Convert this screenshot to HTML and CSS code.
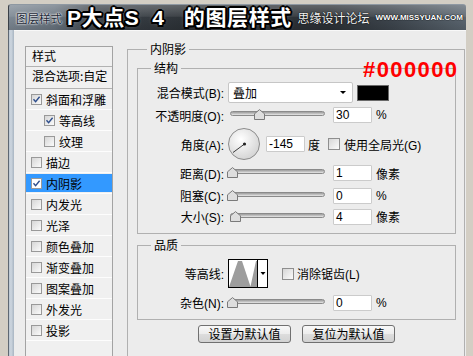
FILE: index.html
```html
<!DOCTYPE html>
<html lang="zh-CN">
<head>
<meta charset="utf-8">
<title>图层样式</title>
<link rel="stylesheet" href="styles.css">
</head>
<body>
<div class="window">
  <div class="titlebar">
    <span class="t-small">图层样式</span>
    <span class="t-big">P大点S  4   的图层样式</span>
    <span class="t-site">思缘设计论坛</span>
    <span class="t-url">WWW.MISSYUAN.COM</span>
  </div>
  <div class="frame">
    <div class="frame-edge"></div>
    <div class="content">
      <ul class="styles-list">
        <li class="row head">样式</li>
        <li class="row blend">混合选项:自定</li>
        <li class="row"><span class="cb"><svg width="9" height="9" viewBox="0 0 9 9"><path d="M1.5 4.3 L3.6 6.6 L7.6 1.8" fill="none" stroke="#2d4d8c" stroke-width="1.4"/></svg></span>斜面和浮雕</li>
        <li class="row sub"><span class="cb"><svg width="9" height="9" viewBox="0 0 9 9"><path d="M1.5 4.3 L3.6 6.6 L7.6 1.8" fill="none" stroke="#2d4d8c" stroke-width="1.4"/></svg></span>等高线</li>
        <li class="row sub"><span class="cb"></span>纹理</li>
        <li class="row"><span class="cb"></span>描边</li>
        <li class="row sel"><span class="cb"><svg width="9" height="9" viewBox="0 0 9 9"><path d="M1.5 4.3 L3.6 6.6 L7.6 1.8" fill="none" stroke="#2d4d8c" stroke-width="1.4"/></svg></span>内阴影</li>
        <li class="row"><span class="cb"></span>内发光</li>
        <li class="row"><span class="cb"></span>光泽</li>
        <li class="row"><span class="cb"></span>颜色叠加</li>
        <li class="row"><span class="cb"></span>渐变叠加</li>
        <li class="row"><span class="cb"></span>图案叠加</li>
        <li class="row"><span class="cb"></span>外发光</li>
        <li class="row"><span class="cb"></span>投影</li>
      </ul>

      <fieldset class="group outer">
        <legend>内阴影</legend>

        <fieldset class="group inner struct">
          <legend>结构</legend>

          <div class="frow r-mode">
            <span class="lbl">混合模式(B):</span>
            <div class="select"><span>叠加</span><span class="arrow"></span></div>
            <span class="swatch"></span>
          </div>

          <div class="frow r-opacity">
            <span class="lbl">不透明度(O):</span>
            <div class="slider"><div class="track"><svg class="thumb" style="left:30%" width="11" height="11" viewBox="0 0 11 11"><path d="M5.5 0.6 L10.5 4.8 V10.5 H0.5 V4.8 Z" fill="#dedede" stroke="#7a7a7a"/></svg></div></div>
            <span class="inp">30</span>
            <span class="unit">%</span>
          </div>

          <div class="frow r-angle">
            <span class="lbl">角度(A):</span>
            <svg class="dial" width="32" height="32" viewBox="0 0 32 32">
              <defs>
                <radialGradient id="dialfill" cx="40%" cy="35%" r="70%">
                  <stop offset="0" stop-color="#ffffff"/>
                  <stop offset="1" stop-color="#d2d2d2"/>
                </radialGradient>
              </defs>
              <circle cx="16" cy="16" r="15.5" fill="url(#dialfill)" stroke="#8c8c8c"/>
              <line x1="16.5" y1="16" x2="5" y2="24.5" stroke="#3a3a3a" stroke-width="1"/>
              <circle cx="16.5" cy="16" r="1.6" fill="#222"/>
            </svg>
            <span class="inp">-145</span>
            <span class="unit deg">度</span>
            <span class="cb big"></span>
            <span class="cb-label">使用全局光(G)</span>
          </div>

          <div class="frow r-dist">
            <span class="lbl">距离(D):</span>
            <div class="slider"><div class="track"><svg class="thumb" style="left:1%" width="11" height="11" viewBox="0 0 11 11"><path d="M5.5 0.6 L10.5 4.8 V10.5 H0.5 V4.8 Z" fill="#dedede" stroke="#7a7a7a"/></svg></div></div>
            <span class="inp">1</span>
            <span class="unit">像素</span>
          </div>

          <div class="frow r-choke">
            <span class="lbl">阻塞(C):</span>
            <div class="slider"><div class="track"><svg class="thumb" style="left:0%" width="11" height="11" viewBox="0 0 11 11"><path d="M5.5 0.6 L10.5 4.8 V10.5 H0.5 V4.8 Z" fill="#dedede" stroke="#7a7a7a"/></svg></div></div>
            <span class="inp">0</span>
            <span class="unit">%</span>
          </div>

          <div class="frow r-size">
            <span class="lbl">大小(S):</span>
            <div class="slider"><div class="track"><svg class="thumb" style="left:4%" width="11" height="11" viewBox="0 0 11 11"><path d="M5.5 0.6 L10.5 4.8 V10.5 H0.5 V4.8 Z" fill="#dedede" stroke="#7a7a7a"/></svg></div></div>
            <span class="inp">4</span>
            <span class="unit">像素</span>
          </div>
        </fieldset>

        <fieldset class="group inner quality">
          <legend>品质</legend>

          <div class="frow r-contour">
            <span class="lbl">等高线:</span>
            <svg class="contour" width="40" height="29" viewBox="0 0 40 29">
              <rect x="0.5" y="0.5" width="39" height="28" fill="#fff" stroke="#000"/>
              <polygon points="1,28 10,2 14,2 22.5,27.5 28,2 29,2 29,28" fill="#9d9d9d"/>
              <line x1="29.5" y1="0.5" x2="29.5" y2="28.5" stroke="#000"/>
              <polygon points="32.5,13 37.5,13 35,16" fill="#000"/>
            </svg>
            <span class="cb big aa"></span>
            <span class="cb-label">消除锯齿(L)</span>
          </div>

          <div class="frow r-noise">
            <span class="lbl">杂色(N):</span>
            <div class="slider"><div class="track"><svg class="thumb" style="left:0%" width="11" height="11" viewBox="0 0 11 11"><path d="M5.5 0.6 L10.5 4.8 V10.5 H0.5 V4.8 Z" fill="#dedede" stroke="#7a7a7a"/></svg></div></div>
            <span class="inp">0</span>
            <span class="unit">%</span>
          </div>
        </fieldset>

        <div class="buttons">
          <button class="btn" type="button">设置为默认值</button>
          <button class="btn" type="button">复位为默认值</button>
        </div>
      </fieldset>
    </div>
  </div>
  <span class="annot">#000000</span>
</div>
</body>
</html>
```

FILE: styles.css
```css
* { box-sizing: border-box; }

html, body {
  margin: 0;
  padding: 0;
  overflow: hidden;
}

body {
  width: 473px;
  height: 356px;
  background: #d3cec4;
  font-family: "Liberation Sans", "Noto Sans CJK SC", sans-serif;
  font-size: 12px;
  color: #000;
}

.window {
  position: relative;
  margin: 4px 0 0 8px;
  width: 458px;
}

/* ---------- title bar ---------- */
.titlebar {
  height: 26px;
  display: flex;
  align-items: center;
  padding: 0 3px 0 7px;
  border-radius: 3px 3px 0 0;
  border-top: 1px solid #8e98a2;
  border-left: 1px solid #3a4047;
  white-space: pre;
  overflow: hidden;
  background:
    linear-gradient(to bottom, rgba(255,255,255,0.25) 0, rgba(255,255,255,0.08) 45%, rgba(0,0,0,0) 50%, rgba(0,0,0,0.12) 100%),
    linear-gradient(to right, #7d8893 0, #6a7580 10%, #3c434a 19%, #2c3136 40%, #2c3136 70%, #3e464e 84%, #5b6670 100%);
}

.t-small {
  font-family: "Noto Sans CJK SC", sans-serif;
  font-size: 11.5px;
  color: #1c2836;
  text-shadow: 0 0 2px #fff, 0 0 2px #fff;
  flex: none;
}

.t-big {
  margin-left: 5px;
  flex: none;
  font-family: "Liberation Sans", "Noto Sans CJK SC", sans-serif;
  font-weight: bold;
  font-size: 21px;
  line-height: 24px;
  letter-spacing: 0.6px;
  color: #fff;
  text-shadow:
    -2px 0 #000, 2px 0 #000, 0 -2px #000, 0 2px #000,
    -1.5px -1.5px #000, 1.5px -1.5px #000, -1.5px 1.5px #000, 1.5px 1.5px #000,
    0 0 4px #9a9a9a;
}

.t-site {
  margin-left: auto;
  margin-right: 6px;
  flex: none;
  font-family: "Noto Sans CJK SC", sans-serif;
  font-size: 12px;
  color: #f4f4f4;
  text-shadow: 0 0 1px #000, 0 0 1px #000;
}

.t-url {
  flex: none;
  font-family: "Liberation Sans", sans-serif;
  font-weight: bold;
  font-size: 8px;
  color: #fff;
  text-shadow: 0 0 1px #000, 0 0 1px #000;
}

/* ---------- window frame ---------- */
.frame {
  display: flex;
  height: 326px;
}

.frame-edge {
  width: 6px;
  flex: none;
  background: linear-gradient(to right, #5e6873 0, #5e6873 1px, #b9c5d1 1px, #cdd6df 3px, #a8b5c2 6px);
}

.content {
  flex: 1;
  display: flex;
  align-items: flex-start;
  padding: 11px 1px 0 11px;
  background: #ececec;
  border-top: 1px solid #f8f8f8;
  overflow: hidden;
}

/* ---------- styles list ---------- */
.styles-list {
  list-style: none;
  margin: 4px 0 0;
  padding: 0;
  width: 88px;
  height: 320px;
  flex: none;
  border: 1px solid #a3a3a3;
  background: #f0f0f0;
  font-family: "Noto Sans CJK SC", sans-serif;
}

.row {
  height: 21px;
  display: flex;
  align-items: center;
  border-bottom: 1px solid #fdfdfd;
  white-space: nowrap;
}

.row.head {
  height: 20px;
  padding: 0 0 3px 6px;
  border-bottom-color: #b2b2b2;
}

.row.blend {
  height: 22px;
  padding: 0 0 4px 6px;
  border-bottom-color: #b2b2b2;
}

.row.sel {
  background: #3399ff;
  box-shadow: inset 0 1px 0 #f0f0f0, inset 0 -1px 0 #f0f0f0;
}

.cb {
  width: 11px;
  height: 11px;
  flex: none;
  display: inline-flex;
  border: 1px solid #999;
  background: linear-gradient(135deg, #d6d6d6, #fbfbfb);
  margin: 0 4px 0 5px;
}

.row.sub .cb { margin-left: 18px; }
.row.sel .cb { background: #fff; }

/* ---------- group boxes ---------- */
.group {
  margin: 0;
  min-width: 0;
  border: 1px solid #b0b0b0;
}

.group > legend {
  padding: 0 3px;
  font-family: "Noto Sans CJK SC", sans-serif;
  font-size: 12px;
  line-height: 14px;
}

.outer {
  width: 338px;
  height: 315px;
  flex: none;
  margin-left: 14px;
  padding: 5px 8px 0 9px;
  border-bottom: none;
}

.outer > legend { margin-left: 10px; }

.inner {
  padding: 7px 0 6px 0;
}

.inner > legend { margin-left: 13px; }

.quality {
  margin-top: 4px;
  padding: 4px 0 5px 0;
}

/* ---------- form rows ---------- */
.frow {
  display: flex;
  align-items: center;
  white-space: nowrap;
}

.r-mode { height: 21px; }
.r-opacity { height: 24px; }
.r-angle { height: 34px; }
.r-dist { height: 24px; }
.r-choke { height: 21px; }
.r-size { height: 21px; }
.r-contour { height: 35px; }
.r-noise { height: 23px; }

.lbl {
  width: 86px;
  flex: none;
  margin-right: 4px;
  text-align: right;
}

.select {
  width: 125px;
  height: 21px;
  flex: none;
  display: flex;
  align-items: center;
  justify-content: space-between;
  padding: 0 6px 0 4px;
  background: #fff;
  border: 1px solid #c6c6c6;
  border-radius: 2px;
  font-family: "Noto Sans CJK SC", sans-serif;
}

.arrow {
  width: 0;
  height: 0;
  border-left: 3px solid transparent;
  border-right: 3px solid transparent;
  border-top: 3px solid #000;
}

.swatch {
  width: 32px;
  height: 16px;
  flex: none;
  margin-left: 4px;
  background: #000;
  border: 1px solid #6a6a6a;
}

.slider {
  width: 99px;
  height: 12px;
  flex: none;
  padding: 2px 2px 0;
}

.track {
  position: relative;
  height: 5px;
  border: 1px solid #8a8a8a;
  border-radius: 3px;
  background: linear-gradient(#9c9c9c, #cdcdcd 70%, #ececec);
}

.thumb {
  position: absolute;
  top: -3px;
  margin-left: -4.5px;
}

.inp {
  width: 39px;
  height: 16px;
  flex: none;
  margin-left: 6px;
  display: flex;
  align-items: center;
  padding-left: 2px;
  background: #fff;
  border: 1px solid #cbcbcb;
  border-radius: 1px;
  font-size: 12px;
}

.unit { margin-left: 4px; }
.unit.deg { margin-left: 3px; }

.dial { flex: none; }

.cb.big {
  width: 12px;
  height: 12px;
  margin: 0 4px 0 8px;
  border-color: #8e8e8e;
}

.cb.aa { margin-left: 14px; margin-right: 3px; }

.contour { flex: none; }

/* ---------- buttons ---------- */
.buttons {
  display: flex;
  justify-content: center;
  gap: 11px;
  margin-top: 5px;
}

.btn {
  width: 93px;
  height: 18px;
  padding: 0;
  font-family: "Noto Sans CJK SC", sans-serif;
  font-size: 12px;
  line-height: 16px;
  color: #000;
  border: 1px solid #707070;
  border-radius: 3px;
  background: linear-gradient(#f8f8f8, #ececec 50%, #dddddd 51%, #d2d2d2);
}

/* ---------- annotation ---------- */
.annot {
  position: absolute;
  left: 355px;
  top: 55px;
  font-family: "Liberation Sans", sans-serif;
  font-weight: bold;
  font-size: 22px;
  line-height: 22px;
  letter-spacing: 1.4px;
  color: #ff0000;
}
```
